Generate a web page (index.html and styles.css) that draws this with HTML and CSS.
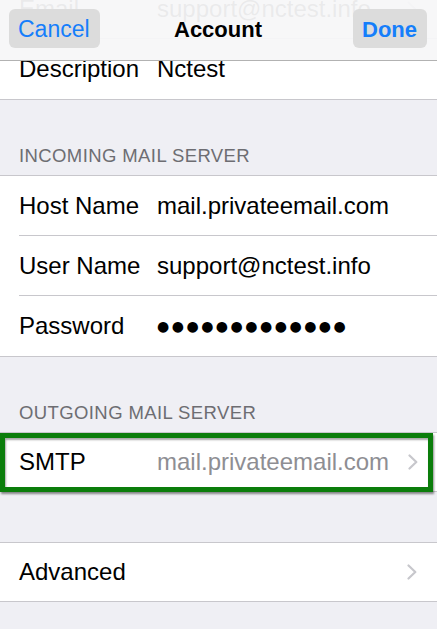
FILE: index.html
```html
<!DOCTYPE html>
<html lang="en">
<head>
<meta charset="utf-8">
<title>Account</title>
<link rel="stylesheet" href="styles.css">
</head>
<body>
<div class="screen">
  <main class="list">
    <section class="group">
      <div class="row row-under">
        <div class="row-inner">
          <span class="label">Email</span>
          <span class="value">support@nctest.info</span>
          <svg class="chevron" width="10" height="16" viewBox="0 0 10 16"><path d="M1.5 1.5 L8.3 8 L1.5 14.5" fill="none" stroke="#c7c7cc" stroke-width="2.2" stroke-linecap="round" stroke-linejoin="round"/></svg>
        </div>
      </div>
      <div class="row">
        <div class="row-inner">
          <span class="label">Description</span>
          <span class="value">Nctest</span>
        </div>
      </div>
    </section>

    <h2 class="section-header">INCOMING MAIL SERVER</h2>
    <section class="group">
      <div class="row">
        <div class="row-inner">
          <span class="label">Host Name</span>
          <span class="value">mail.privateemail.com</span>
        </div>
      </div>
      <div class="row">
        <div class="row-inner">
          <span class="label">User Name</span>
          <span class="value">support@nctest.info</span>
        </div>
      </div>
      <div class="row">
        <div class="row-inner">
          <span class="label">Password</span>
          <span class="value password">●●●●●●●●●●●●●</span>
        </div>
      </div>
    </section>

    <h2 class="section-header">OUTGOING MAIL SERVER</h2>
    <section class="group">
      <div class="row row-short highlighted">
        <div class="row-inner">
          <span class="label">SMTP</span>
          <span class="value value-muted">mail.privateemail.com</span>
          <svg class="chevron" width="10" height="16" viewBox="0 0 10 16"><path d="M1.5 1.5 L8.3 8 L1.5 14.5" fill="none" stroke="#c7c7cc" stroke-width="2.2" stroke-linecap="round" stroke-linejoin="round"/></svg>
        </div>
      </div>
    </section>

    <div class="spacer"></div>

    <section class="group">
      <div class="row row-short">
        <div class="row-inner">
          <span class="label">Advanced</span>
          <span class="value"></span>
          <svg class="chevron" width="10" height="16" viewBox="0 0 10 16"><path d="M1.5 1.5 L8.3 8 L1.5 14.5" fill="none" stroke="#c7c7cc" stroke-width="2.2" stroke-linecap="round" stroke-linejoin="round"/></svg>
        </div>
      </div>
    </section>
  </main>

  <header class="nav">
    <button class="nav-btn nav-cancel">Cancel</button>
    <h1 class="nav-title">Account</h1>
    <button class="nav-btn nav-done">Done</button>
  </header>
</div>
</body>
</html>
```

FILE: styles.css
```css
* { box-sizing: border-box; }

html, body {
  margin: 0;
  padding: 0;
  background: #efeff4;
}

body {
  font-family: "Liberation Sans", Arial, sans-serif;
  color: #000;
}

.screen {
  position: relative;
  width: 437px;
  height: 629px;
  overflow: hidden;
  background: #efeff4;
}

.list {
  margin-top: -22px;
}

.group {
  background: #fff;
  border-top: 1px solid #c8c7cc;
  border-bottom: 1px solid #c8c7cc;
}

.row {
  padding-left: 19px;
}

.row-inner {
  display: flex;
  align-items: center;
  height: 60px;
  padding-right: 20px;
  border-bottom: 1px solid #c8c7cc;
  font-size: 24px;
}

.row:last-child .row-inner {
  border-bottom: none;
}

.row-short .row-inner {
  height: 58px;
}

.label {
  width: 138px;
  flex: none;
  white-space: nowrap;
}

.value {
  flex: 1;
  white-space: nowrap;
}

.value-muted {
  color: #8e8e93;
  text-align: right;
  padding-right: 19px;
}

.password {
  font-family: "DejaVu Sans", sans-serif;
  font-size: 14px;
  letter-spacing: 2.5px;
}

.chevron {
  flex: none;
  display: block;
}

.section-header {
  margin: 0;
  height: 75px;
  display: flex;
  align-items: flex-end;
  padding: 0 0 10px 19px;
  font-size: 18.5px;
  font-weight: normal;
  line-height: 18px;
  letter-spacing: 0.4px;
  color: #6d6d72;
}

.spacer {
  height: 50px;
}

.highlighted {
  position: relative;
}

.highlighted::after {
  content: "";
  position: absolute;
  left: 0;
  right: 4px;
  top: 0;
  bottom: -1px;
  border: 5px solid #0b7d0b;
  box-shadow: 1px 2px 2px rgba(0, 0, 0, 0.45), inset 1px 2px 2px rgba(0, 0, 0, 0.35);
  pointer-events: none;
}

.nav {
  position: absolute;
  z-index: 10;
  top: 0;
  left: 0;
  right: 0;
  height: 61px;
  padding: 9px 10px 0 9px;
  display: grid;
  grid-template-columns: 1fr auto 1fr;
  align-items: start;
  background-color: rgba(247, 247, 248, 0.95);
  border-bottom: 1px solid #b2b2b2;
}

.nav-btn {
  height: 39px;
  border: none;
  border-radius: 6px;
  background: #dcdcdc;
  color: #157efb;
  font-family: "Liberation Sans", Arial, sans-serif;
  font-size: 23px;
  padding: 0 9px;
  margin: 0;
  line-height: 41px;
}

.nav-cancel {
  justify-self: start;
  width: 91px;
  text-align: left;
}

.nav-done {
  justify-self: end;
  width: 74px;
  font-weight: bold;
  font-size: 22px;
  text-align: left;
}

.nav-title {
  margin: 0;
  font-size: 22px;
  font-weight: bold;
  line-height: 41px;
  text-align: center;
}
```
